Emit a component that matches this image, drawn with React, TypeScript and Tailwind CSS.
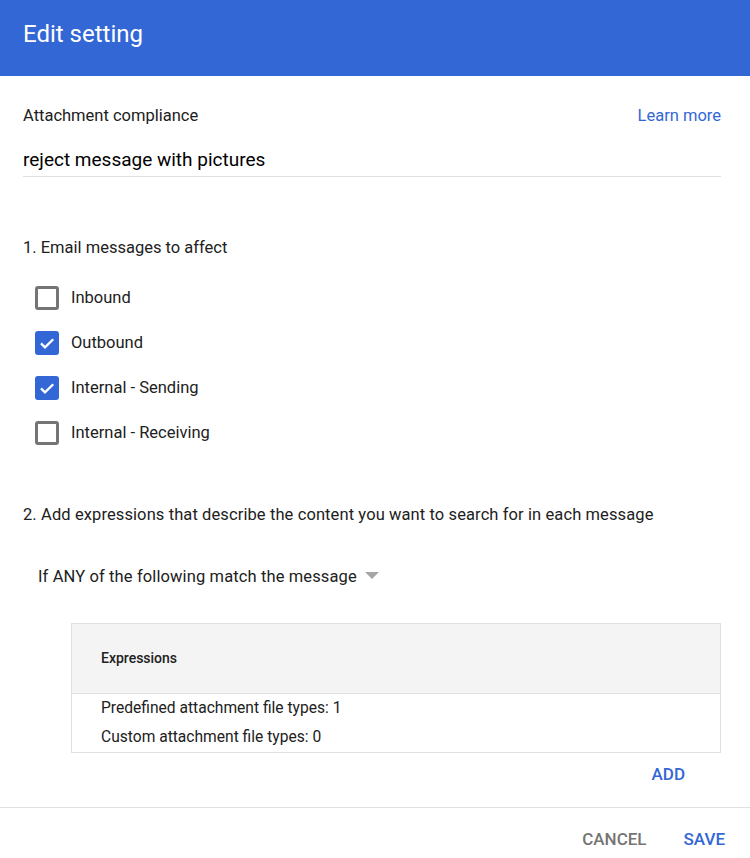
const options = [
    { label: "Inbound", checked: false },
    { label: "Outbound", checked: true },
    { label: "Internal - Sending", checked: true },
    { label: "Internal - Receiving", checked: false },
]

function Box({ checked }: { checked: boolean }) {
    if (checked) {
        return (
            <span className="flex h-[24px] w-[24px] items-center justify-center rounded-[3px] bg-[#3367d6]">
                <svg width="18" height="18" viewBox="0 0 18 18" fill="none">
                    <path d="M3 9.4l4 4L15.2 5.2" stroke="white" strokeWidth="2.3" />
                </svg>
            </span>
        )
    }
    return <span className="block h-[24px] w-[24px] rounded-[3px] border-[3px] border-[#757575]" />
}

export default function App() {
    return (
        <div className="flex h-[858px] w-[750px] flex-col bg-white font-['Roboto',sans-serif] text-[#212121]">
            {/* Header */}
            <div className="h-[76px] bg-[#3367d6] px-[23px] pt-[18px]">
                <h1 className="text-[24px] leading-[32px] font-normal text-white">Edit setting</h1>
            </div>

            <div className="flex flex-1 flex-col pl-[23px] pr-[29px]">
                <div className="mt-[30px] flex items-center justify-between text-[16.5px] leading-[20px]">
                    <span className="text-[#212121]">Attachment compliance</span>
                    <a className="text-[#3367d6]">Learn more</a>
                </div>
                <div className="mt-[22px] border-b border-[#e0e0e0] pb-[4px] text-[19px] leading-[24px] text-black">
                    reject message with pictures
                </div>

                <p className="mt-[61px] text-[16.5px] leading-[20px]">1. Email messages to affect</p>
                <div className="mt-[28px] flex flex-col gap-[21px] pl-[12px]">
                    {options.map((o) => (
                        <label key={o.label} className="flex h-[24px] items-center gap-[12px] text-[16.5px]">
                            <Box checked={o.checked} />
                            <span>{o.label}</span>
                        </label>
                    ))}
                </div>

                <p className="mt-[60px] text-[16.5px] leading-[20px] tracking-[0.1px]">
                    2. Add expressions that describe the content you want to search for in each message
                </p>

                <div className="mt-[42px] flex h-[20px] items-center gap-[8px] pl-[15px] text-[16.5px] tracking-[0.12px]">
                    <span>If ANY of the following match the message</span>
                    <svg width="14" height="7" viewBox="0 0 14 7" className="-mt-[4px]">
                        <path d="M0 0h14L7 7z" fill="#a6a6a6" />
                    </svg>
                </div>

                {/* Expressions table */}
                <div className="ml-[48px] mt-[36px] border border-[#e0e0e0] text-[15.6px]">
                    <div className="flex h-[70px] items-center border-b border-[#e0e0e0] bg-[#f4f4f4] px-[29px] text-[14px] font-medium">
                        Expressions
                    </div>
                    <div className="flex flex-col px-[29px]">
                        <div className="flex h-[29px] items-center">Predefined attachment file types: 1</div>
                        <div className="flex h-[29px] items-center">Custom attachment file types: 0</div>
                    </div>
                </div>

                <div className="mt-[11px] flex justify-end pr-[36px]">
                    <button className="text-[17px] leading-[20px] font-medium text-[#3367d6]">ADD</button>
                </div>
            </div>

            {/* Footer */}
            <div className="flex h-[51px] items-start justify-end gap-[37px] border-t border-[#e0e0e0] pr-[25px] pt-[21px] text-[17px] leading-[20px] font-medium">
                <button className="text-[#757575]">CANCEL</button>
                <button className="text-[#3367d6]">SAVE</button>
            </div>
        </div>
    )
}
